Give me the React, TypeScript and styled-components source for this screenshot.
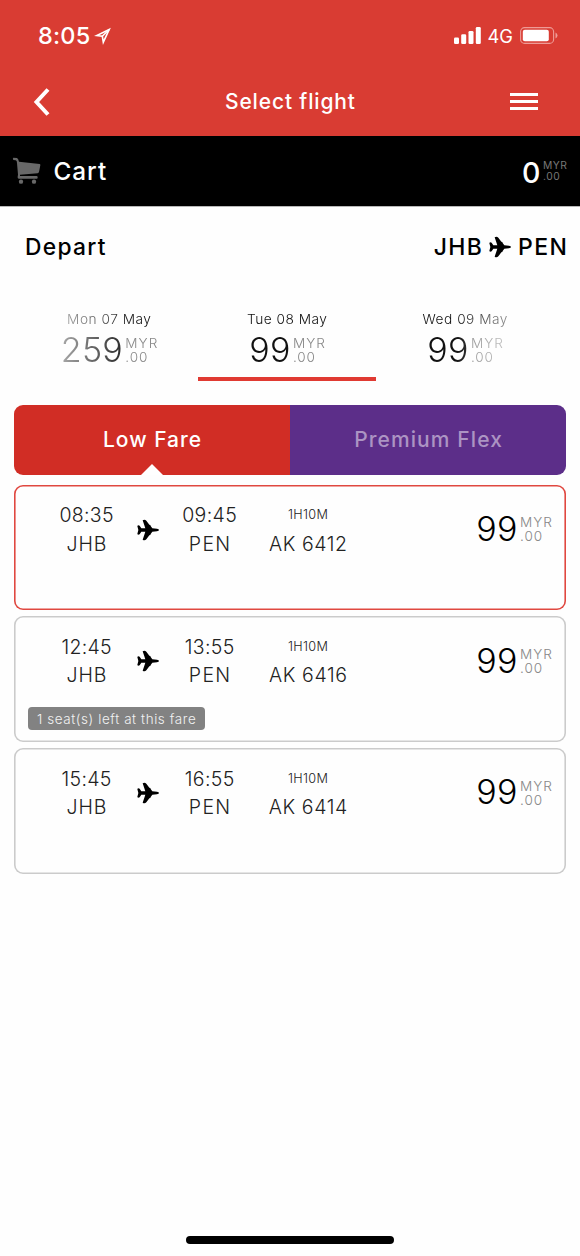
import React from "react";
import styled, { createGlobalStyle } from "styled-components";

const GlobalStyle = createGlobalStyle`
  * { box-sizing: border-box; }
  html, body { margin: 0; padding: 0; background: #fefefe; }
  body { font-family: Inter, "Liberation Sans", sans-serif; color: #000; }
`;

const Screen = styled.div`
  display: flex;
  flex-direction: column;
  width: 580px;
  height: 1256px;
  overflow: hidden;
  background: #fefefe;
`;

const Header = styled.header`
  height: 136px;
  flex: none;
  background: #d93c33;
  color: #fff;
`;

const StatusBar = styled.div`
  display: flex;
  align-items: center;
  justify-content: space-between;
  height: 71px;
  padding: 0 22px 0 38px;
`;

const StatusGroup = styled.div<{ $gap: number }>`
  display: flex;
  align-items: center;
  gap: ${(p) => p.$gap}px;
`;

const Txt = styled.span<{ $size: number; $weight?: number; $track?: number; $line?: number; $color?: string }>`
  display: block;
  white-space: pre;
  font-size: ${(p) => p.$size}px;
  font-weight: ${(p) => p.$weight ?? 500};
  letter-spacing: ${(p) => p.$track ?? 0}px;
  margin-right: ${(p) => -(p.$track ?? 0)}px;
  line-height: ${(p) => p.$line ?? 24}px;
  ${(p) => p.$color && `color: ${p.$color};`}
`;

const NavBar = styled.nav`
  display: grid;
  grid-template-columns: 60px 1fr 60px;
  align-items: center;
  justify-items: center;
  height: 61px;
  padding: 0 12px 0 12px;
`;

const BackSlot = styled.div`
  display: flex;
  justify-self: start;
  padding-left: 20px;
`;

const MenuLines = styled.div`
  display: flex;
  flex-direction: column;
  justify-content: space-between;
  justify-self: end;
  width: 28px;
  height: 17px;
  margin-right: 30px;
  i { height: 3px; background: #fff; }
`;

const CartBar = styled.section`
  display: flex;
  align-items: center;
  flex: none;
  height: 71px;
  padding: 0 13px 0 12px;
  background: #000;
  color: #fff;
  border-bottom: 1px solid #b8b8b8;
`;

const CartLabel = styled.div`
  flex: 1;
  padding-left: 12.5px;
`;

const CartAmount = styled.div`
  padding-top: 4px;
`;

const RouteRow = styled.section`
  display: flex;
  align-items: center;
  justify-content: space-between;
  flex: none;
  height: 79px;
  padding: 0 13px 0 25px;
`;

const Route = styled.div`
  display: flex;
  align-items: center;
  gap: 7px;
`;

const Dates = styled.section`
  display: grid;
  grid-template-columns: repeat(3, 178px);
  flex: none;
  height: 95px;
  padding: 0 20px;
  mask-image: linear-gradient(90deg, transparent 20px, #000 135px, #000 455px, transparent 555px);
`;

const DateCell = styled.button<{ $active?: boolean }>`
  display: flex;
  flex-direction: column;
  align-items: center;
  gap: 4px;
  padding: 21px 0 0;
  border: 0;
  border-bottom: 4px solid ${(p) => (p.$active ? "#e03a32" : "transparent")};
  background: none;
  font-family: inherit;
  color: #111;
`;

const Price = styled.div<{ $gap: number; $drop: number }>`
  display: flex;
  align-items: center;
  gap: ${(p) => p.$gap}px;
  text-align: left;
  > div:last-child { padding-top: ${(p) => p.$drop}px; }
`;

const Tabs = styled.div`
  display: flex;
  flex: none;
  height: 69.5px;
  margin: 24px 14px 0;
  border-radius: 9px;
  overflow: hidden;
`;

const Tab = styled.button<{ $bg: string; $color: string }>`
  position: relative;
  display: flex;
  align-items: center;
  justify-content: center;
  flex: 1;
  padding: 0;
  border: 0;
  background: ${(p) => p.$bg};
  color: ${(p) => p.$color};
  font-family: inherit;
`;

const Pointer = styled.span`
  position: absolute;
  left: 50%;
  bottom: 0;
  transform: translateX(-50%);
  border: 11px solid transparent;
  border-top: 0;
  border-bottom-color: #fff;
`;

const Flights = styled.main`
  display: flex;
  flex-direction: column;
  gap: 6.3px;
  padding: 10px 14px 0;
  flex: 1;
`;

const Card = styled.article<{ $active?: boolean }>`
  flex: none;
  height: 125.5px;
  padding: 16.5px 14px 0;
  box-shadow: inset 0 0 0 1.6px ${(p) => (p.$active ? "#e04840" : "#cbcbcb")};
  border-radius: 9px;
  background: #fefefe;
  color: #222;
`;

const CardGrid = styled.div`
  display: grid;
  grid-template-columns: 90px 33px 90px 107px 1fr;
  height: 57px;
  padding-left: 13.5px;
`;

const Stack = styled.div`
  display: flex;
  flex-direction: column;
  align-items: center;
`;

const PlaneSlot = styled.div`
  display: flex;
  justify-content: center;
  align-items: center;
`;

const Fare = styled.div`
  display: flex;
  justify-content: flex-end;
  align-items: center;
  padding-bottom: 1.5px;
  color: #000;
`;

const SeatBadge = styled.div`
  display: flex;
  align-items: center;
  width: 177px;
  height: 23px;
  margin-top: 17.5px;
  padding-left: 9px;
  border-radius: 4px;
  background: #828282;
`;

const HomeBar = styled.div`
  flex: none;
  width: 208px;
  height: 8px;
  margin: 0 auto 12px;
  border-radius: 4px;
  background: #000;
`;

const Plane = () => (
  <svg width="22" height="22" viewBox="0 0 66 66" fill="#000">
    <path d="M60 29Q66 30 66 33T60 37L46 38L41 45Q41 49 37 49L28 61Q23 66 17 62L25 38H13L8 46Q3 49 1 45L4 33L1 21Q3 17 8 20L13 28H25L17 4Q23 0 28 5L37 17Q41 17 41 21L46 28Z" />
  </svg>
);

const CartIcon = () => (
  <svg width="29" height="28" viewBox="36 64 87 84" fill="#686868">
    <path d="M40 66L51 67Q55 69 57 78L119 85Q122 86 121 89L117 109Q116 112 113 113L60 117V121H110Q114 122 113 126Q113 129 110 129H56Q52 128 53 123L54 117L51 82Q51 75 47 74L40 73Q37 69 40 66Z" />
    <circle cx="63" cy="138" r="6.5" />
    <circle cx="102" cy="138" r="6.5" />
  </svg>
);

const flights = [
  { out: "08:35", arr: "09:45", no: "AK 6412", active: true, seats: "" },
  { out: "12:45", arr: "13:55", no: "AK 6416", active: false, seats: "1 seat(s) left at this fare" },
  { out: "15:45", arr: "16:55", no: "AK 6414", active: false, seats: "" },
];

const dates = [
  { day: "Mon 07 May", amount: "259" },
  { day: "Tue 08 May", amount: "99", active: true },
  { day: "Wed 09 May", amount: "99" },
];

const Money = ({ amount }: { amount: string }) => (
  <Price $gap={2.5} $drop={1}>
    <Txt $size={34} $weight={300} $line={28} $track={0.3}>{amount}</Txt>
    <div>
      <Txt $size={13.6} $weight={300} $line={14} $track={1} $color="#888">MYR</Txt>
      <Txt $size={13.6} $weight={300} $line={14} $track={0.9} $color="#888">.00</Txt>
    </div>
  </Price>
);

export default function App() {
  return (
    <Screen>
      <GlobalStyle />
      <Header>
        <StatusBar>
          <StatusGroup $gap={4}>
            <Txt $size={23.5} $track={0.2}>8:05</Txt>
            <svg width="17" height="18" viewBox="0 0 17 18" fill="none" stroke="#fff" strokeWidth="1.6">
              <path d="M15.2 2.5L2.8 8.6L8.3 9.2L9.3 15.2Z" />
              <path d="M15.2 2.5L8.3 9.2" />
            </svg>
          </StatusGroup>
          <StatusGroup $gap={7}>
            <svg width="27" height="17" fill="#fff">
              <rect x="0" y="10.5" width="5" height="6.5" rx="1.3" />
              <rect x="7.2" y="7.3" width="5" height="9.7" rx="1.3" />
              <rect x="14.5" y="4" width="5" height="13" rx="1.3" />
              <rect x="21.8" y="0" width="5" height="17" rx="1.3" />
            </svg>
            <Txt $size={18.3} $weight={400}>4G</Txt>
            <svg width="38" height="17" fill="none">
              <rect x="0.6" y="0.6" width="33" height="15.8" rx="4" stroke="#ee9b96" strokeWidth="1.1" />
              <rect x="2.8" y="2.8" width="26" height="11.4" rx="2" fill="#fff" />
              <path d="M35.5 5.5Q37.5 6.5 37.5 8.5T35.5 11.5Z" fill="#ee9b96" />
            </svg>
          </StatusGroup>
        </StatusBar>
        <NavBar>
          <BackSlot>
            <svg width="18" height="28" fill="none" stroke="#fff" strokeWidth="4">
              <path d="M16 1.5L4.5 14L16 26.5" />
            </svg>
          </BackSlot>
          <Txt $size={21} $track={0.85}>Select flight</Txt>
          <MenuLines><i /><i /><i /></MenuLines>
        </NavBar>
      </Header>

      <CartBar>
        <CartIcon />
        <CartLabel><Txt $size={24.3} $track={1}>Cart</Txt></CartLabel>
        <Price $gap={2.5} $drop={0}>
          <CartAmount><Txt $size={28.5} $weight={500} $line={28}>0</Txt></CartAmount>
          <div>
            <Txt $size={10.3} $weight={400} $line={11} $track={0.6} $color="#777">MYR</Txt>
            <Txt $size={10.3} $weight={400} $line={11} $track={0.6} $color="#777">.00</Txt>
          </div>
        </Price>
      </CartBar>

      <RouteRow>
        <Txt $size={22.8} $track={1.3}>Depart</Txt>
        <Route>
          <Txt $size={23} $track={1.4}>JHB</Txt>
          <Plane />
          <Txt $size={23} $track={1.5}>PEN</Txt>
        </Route>
      </RouteRow>

      <Dates>
        {dates.map((d) => (
          <DateCell key={d.day} $active={d.active}>
            <Txt $size={13.7} $weight={300} $track={0.5}>{d.day}</Txt>
            <Money amount={d.amount} />
          </DateCell>
        ))}
      </Dates>

      <Tabs>
        <Tab $bg="#d12d25" $color="#fff">
          <Txt $size={21} $track={1}>Low Fare</Txt>
          <Pointer />
        </Tab>
        <Tab $bg="#5c2e89" $color="#ac94c3">
          <Txt $size={21} $track={1.1}>Premium Flex</Txt>
        </Tab>
      </Tabs>

      <Flights>
        {flights.map((f) => (
          <Card key={f.no} $active={f.active}>
            <CardGrid>
              <Stack>
                <Txt $size={19.5} $weight={300} $line={28.5} $track={0.3}>{f.out}</Txt>
                <Txt $size={19.5} $weight={300} $line={28.5} $track={0.9}>JHB</Txt>
              </Stack>
              <PlaneSlot><Plane /></PlaneSlot>
              <Stack>
                <Txt $size={19.5} $weight={300} $line={28.5} $track={0.4}>{f.arr}</Txt>
                <Txt $size={19.5} $weight={300} $line={28.5} $track={1.3}>PEN</Txt>
              </Stack>
              <Stack>
                <Txt $size={12.7} $weight={300} $line={28.5} $track={0.3}>1H10M</Txt>
                <Txt $size={19.5} $weight={300} $line={28.5} $track={0.6}>{f.no}</Txt>
              </Stack>
              <Fare><Money amount="99" /></Fare>
            </CardGrid>
            {f.seats && (
              <SeatBadge>
                <Txt $size={13.4} $weight={300} $track={0.6} $color="#f2f2f2">{f.seats}</Txt>
              </SeatBadge>
            )}
          </Card>
        ))}
      </Flights>
      <HomeBar />
    </Screen>
  );
}
